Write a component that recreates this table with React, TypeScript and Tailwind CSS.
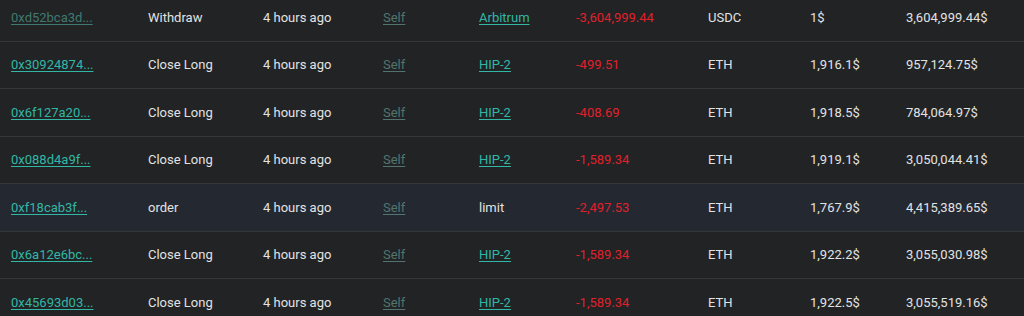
import React from "react";

interface Tx {
  hash: string;
  type: string;
  time: string;
  source: string;
  sourceLink: boolean;
  pnl: string;
  coin: string;
  price: string;
  value: string;
  dim?: boolean;
  active?: boolean;
}

const ROWS: Tx[] = [
  { hash: "0xd52bca3d...", type: "Withdraw", time: "4 hours ago", source: "Arbitrum", sourceLink: true, pnl: "-3,604,999.44", coin: "USDC", price: "1$", value: "3,604,999.44$", dim: true },
  { hash: "0x30924874...", type: "Close Long", time: "4 hours ago", source: "HIP-2", sourceLink: true, pnl: "-499.51", coin: "ETH", price: "1,916.1$", value: "957,124.75$" },
  { hash: "0x6f127a20...", type: "Close Long", time: "4 hours ago", source: "HIP-2", sourceLink: true, pnl: "-408.69", coin: "ETH", price: "1,918.5$", value: "784,064.97$" },
  { hash: "0x088d4a9f...", type: "Close Long", time: "4 hours ago", source: "HIP-2", sourceLink: true, pnl: "-1,589.34", coin: "ETH", price: "1,919.1$", value: "3,050,044.41$" },
  { hash: "0xf18cab3f...", type: "order", time: "4 hours ago", source: "limit", sourceLink: false, pnl: "-2,497.53", coin: "ETH", price: "1,767.9$", value: "4,415,389.65$", active: true },
  { hash: "0x6a12e6bc...", type: "Close Long", time: "4 hours ago", source: "HIP-2", sourceLink: true, pnl: "-1,589.34", coin: "ETH", price: "1,922.2$", value: "3,055,030.98$" },
  { hash: "0x45693d03...", type: "Close Long", time: "4 hours ago", source: "HIP-2", sourceLink: true, pnl: "-1,589.34", coin: "ETH", price: "1,922.5$", value: "3,055,519.16$" },
];

export default function App() {
  return (
    <div className="h-[316px] w-[1024px] overflow-hidden bg-[#212325] text-[13px] text-[#e2e2e2] font-['Roboto',sans-serif]">
      <div className="-mt-[6px]">
        {ROWS.map((row) => (
          <div
            key={row.hash}
            className={`flex h-[47.5px] items-center border-b border-[#34373a] ${row.active ? "bg-[#242831]" : ""}`}
          >
            <div className="w-[148px] pl-[11px]">
              <a className={`underline underline-offset-2 ${row.dim ? "text-[#3f7a70]" : "text-[#32b7a5]"}`}>{row.hash}</a>
            </div>
            <div className="w-[115px]">{row.type}</div>
            <div className="w-[120px]">{row.time}</div>
            <div className="w-[96px]">
              <a className="text-[#51756e] underline underline-offset-2">Self</a>
            </div>
            <div className="w-[97px]">
              {row.sourceLink ? (
                <a className="text-[#32b7a5] underline underline-offset-2">{row.source}</a>
              ) : (
                <span>{row.source}</span>
              )}
            </div>
            <div className="w-[132px] text-[#e0212b]">{row.pnl}</div>
            <div className="w-[102px]">{row.coin}</div>
            <div className="w-[96px]">{row.price}</div>
            <div className="flex-1">{row.value}</div>
          </div>
        ))}
      </div>
    </div>
  );
}
